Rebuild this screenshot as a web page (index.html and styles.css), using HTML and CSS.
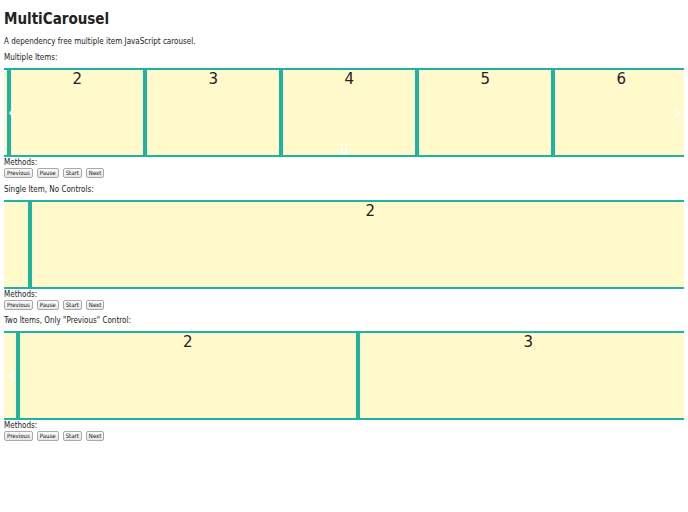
FILE: index.html
```html
<!DOCTYPE html>
<html>
<head>
<meta charset="utf-8">
<title>MultiCarousel</title>
<link rel="stylesheet" href="styles.css">
</head>
<body>
<h1 class="title">MultiCarousel</h1>
<p class="desc">A dependency free multiple item JavaScript carousel.</p>

<section class="demo">
  <p class="label">Multiple Items:</p>
  <div class="carousel">
    <div class="track track-multi">
      <div class="item w136"></div>
      <div class="item w136">2</div>
      <div class="item w136">3</div>
      <div class="item w136">4</div>
      <div class="item w136">5</div>
      <div class="item w136">6</div>
      <div class="item w136"></div>
    </div>
    <svg class="ctrl prev" width="8" height="12" viewBox="0 0 8 12"><path d="M6 1 L2 6 L6 11" fill="none" stroke="#fff" stroke-width="1.6"/></svg>
    <svg class="ctrl next" width="8" height="12" viewBox="0 0 8 12"><path d="M2 1 L6 6 L2 11" fill="none" stroke="#fff" stroke-width="1.6"/></svg>
    <svg class="ctrl pause" width="8" height="9" viewBox="0 0 8 9"><rect x="1" y="0" width="2" height="9" fill="#fff"/><rect x="5" y="0" width="2" height="9" fill="#fff"/></svg>
  </div>
  <p class="methods">Methods:</p>
  <div class="buttons"><button class="btn">Previous</button><button class="btn">Pause</button><button class="btn">Start</button><button class="btn">Next</button></div>
</section>

<section class="demo">
  <p class="label">Single Item, No Controls:</p>
  <div class="carousel">
    <div class="track track-single">
      <div class="item w680"></div>
      <div class="item w680">2</div>
    </div>
  </div>
  <p class="methods">Methods:</p>
  <div class="buttons"><button class="btn">Previous</button><button class="btn">Pause</button><button class="btn">Start</button><button class="btn">Next</button></div>
</section>

<section class="demo demo-last">
  <p class="label">Two Items, Only "Previous" Control:</p>
  <div class="carousel">
    <div class="track track-two">
      <div class="item w340"></div>
      <div class="item w340">2</div>
      <div class="item w340">3</div>
    </div>
    <svg class="ctrl prev" width="8" height="12" viewBox="0 0 8 12"><path d="M6 1 L2 6 L6 11" fill="none" stroke="#fff" stroke-width="1.6"/></svg>
  </div>
  <p class="methods">Methods:</p>
  <div class="buttons"><button class="btn">Previous</button><button class="btn">Pause</button><button class="btn">Start</button><button class="btn">Next</button></div>
</section>
</body>
</html>
```

FILE: styles.css
```css
html, body {
  margin: 0;
  padding: 0;
  background: #fff;
}
body {
  padding: 0 4px;
  font-family: "DejaVu Sans", Verdana, sans-serif;
  font-stretch: condensed;
  color: #222;
}
.title {
  margin: 10px 0 0;
  font-size: 15px;
  line-height: 18px;
  font-weight: bold;
  color: #222;
}
.desc {
  margin: 9px 0 0;
  font-size: 8px;
  line-height: 10px;
}
.demo { margin-top: 6px; }
.demo + .demo { margin-top: 7px; }
.demo + .demo-last { margin-top: 6px; }
.label {
  margin: 0 0 5px;
  font-size: 8px;
  line-height: 10px;
}
.carousel {
  position: relative;
  overflow: hidden;
  height: 85px;
  border-top: 2px solid #1db4a4;
  border-bottom: 2px solid #1db4a4;
  background: #fff9cc;
}
.track {
  display: flex;
  height: 100%;
}
.track-multi { margin-left: -132.7px; }
.track-single { margin-left: -655.7px; }
.track-two { margin-left: -329px; }
.item {
  flex: none;
  box-sizing: border-box;
  height: 100%;
  border-left: 4px solid #1db4a4;
  background: #fff9cc;
  text-align: center;
  font-family: "DejaVu Sans", Verdana, sans-serif;
  font-stretch: normal;
  font-size: 15px;
  line-height: 17px;
  padding-top: 1px;
  color: #222;
}
.w136 { width: 136px; }
.w340 { width: 340.5px; }
.w680 { width: 680px; }
.ctrl {
  position: absolute;
  opacity: 0.9;
}
.prev { left: 4px; top: 37px; }
.next { right: 3px; top: 37px; }
.pause { left: 336px; bottom: 0; opacity: 0.85; }
.methods {
  margin: 1px 0 0;
  font-size: 8px;
  line-height: 10px;
}
.buttons {
  display: flex;
  gap: 4px;
  height: 10px;
}
.btn {
  box-sizing: border-box;
  height: 10px;
  margin: 0;
  padding: 0 2px;
  font-family: "DejaVu Sans", Verdana, sans-serif;
  font-stretch: condensed;
  font-size: 6px;
  line-height: 8px;
  color: #111;
  background: linear-gradient(#fbfbfb, #e6e6e6);
  border: 1px solid #a9a9a9;
  border-radius: 2px;
}
```
